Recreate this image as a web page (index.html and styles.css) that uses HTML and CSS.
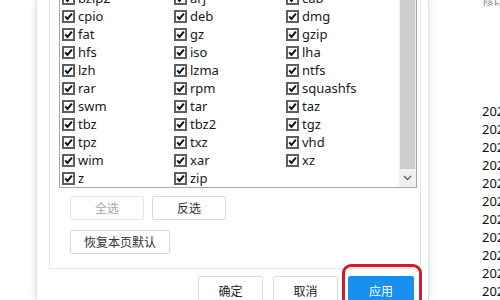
FILE: index.html
```html
<!DOCTYPE html>
<html lang="zh">
<head>
<meta charset="utf-8">
<link rel="stylesheet" href="styles.css">
</head>
<body>
<svg width="0" height="0" class="defs">
  <symbol id="cb" viewBox="0 0 13 13">
    <rect x="1" y="1" width="11" height="11" fill="#fff" stroke="#5f5f5f" stroke-width="2"/>
    <path d="M3.2 6.4 L5.5 8.9 L9.9 3.6" fill="none" stroke="#111" stroke-width="2"/>
  </symbol>
</svg>
<div class="screen">
  <div class="bg-left"></div>
  <div class="dialog">
    <div class="panel">
      <div class="listbox">
        <div class="grid">
          <label class="item"><svg class="cb"><use href="#cb"/></svg>bzip2</label>
          <label class="item"><svg class="cb"><use href="#cb"/></svg>arj</label>
          <label class="item"><svg class="cb"><use href="#cb"/></svg>cab</label>
          <label class="item"><svg class="cb"><use href="#cb"/></svg>cpio</label>
          <label class="item"><svg class="cb"><use href="#cb"/></svg>deb</label>
          <label class="item"><svg class="cb"><use href="#cb"/></svg>dmg</label>
          <label class="item"><svg class="cb"><use href="#cb"/></svg>fat</label>
          <label class="item"><svg class="cb"><use href="#cb"/></svg>gz</label>
          <label class="item"><svg class="cb"><use href="#cb"/></svg>gzip</label>
          <label class="item"><svg class="cb"><use href="#cb"/></svg>hfs</label>
          <label class="item"><svg class="cb"><use href="#cb"/></svg>iso</label>
          <label class="item"><svg class="cb"><use href="#cb"/></svg>lha</label>
          <label class="item"><svg class="cb"><use href="#cb"/></svg>lzh</label>
          <label class="item"><svg class="cb"><use href="#cb"/></svg>lzma</label>
          <label class="item"><svg class="cb"><use href="#cb"/></svg>ntfs</label>
          <label class="item"><svg class="cb"><use href="#cb"/></svg>rar</label>
          <label class="item"><svg class="cb"><use href="#cb"/></svg>rpm</label>
          <label class="item"><svg class="cb"><use href="#cb"/></svg>squashfs</label>
          <label class="item"><svg class="cb"><use href="#cb"/></svg>swm</label>
          <label class="item"><svg class="cb"><use href="#cb"/></svg>tar</label>
          <label class="item"><svg class="cb"><use href="#cb"/></svg>taz</label>
          <label class="item"><svg class="cb"><use href="#cb"/></svg>tbz</label>
          <label class="item"><svg class="cb"><use href="#cb"/></svg>tbz2</label>
          <label class="item"><svg class="cb"><use href="#cb"/></svg>tgz</label>
          <label class="item"><svg class="cb"><use href="#cb"/></svg>tpz</label>
          <label class="item"><svg class="cb"><use href="#cb"/></svg>txz</label>
          <label class="item"><svg class="cb"><use href="#cb"/></svg>vhd</label>
          <label class="item"><svg class="cb"><use href="#cb"/></svg>wim</label>
          <label class="item"><svg class="cb"><use href="#cb"/></svg>xar</label>
          <label class="item"><svg class="cb"><use href="#cb"/></svg>xz</label>
          <label class="item"><svg class="cb"><use href="#cb"/></svg>z</label>
          <label class="item"><svg class="cb"><use href="#cb"/></svg>zip</label>
        </div>
        <div class="scrollbar">
          <div class="thumb"></div>
          <div class="arrow"><svg width="9" height="6" viewBox="0 0 9 6"><path d="M1 1 L4.5 4.5 L8 1" fill="none" stroke="#606060" stroke-width="1.3"/></svg></div>
        </div>
      </div>
      <div class="btn-row first">
        <button class="btn sel disabled">全选</button>
        <button class="btn sel">反选</button>
      </div>
      <div class="btn-row second">
        <button class="btn restore">恢复本页默认</button>
      </div>
    </div>
    <div class="footer">
      <button class="btn foot">确定</button>
      <button class="btn foot">取消</button>
      <div class="apply-wrap">
        <button class="btn foot primary">应用</button>
        <div class="highlight"></div>
      </div>
    </div>
  </div>
  <div class="bg-right">
    <div class="hdr">修改日期</div>
    <div class="dates">
      <div>2024/03/15 10:21</div>
      <div>2024/03/15 10:21</div>
      <div>2024/03/15 10:21</div>
      <div>2024/03/15 10:21</div>
      <div>2024/03/15 10:21</div>
      <div>2024/03/15 10:21</div>
      <div>2024/03/15 10:21</div>
      <div>2024/03/15 10:21</div>
      <div>2024/03/15 10:21</div>
      <div>2024/03/15 10:21</div>
      <div>2024/03/15 10:21</div>
    </div>
  </div>
</div>
</body>
</html>
```

FILE: styles.css
```css
html, body {
  margin: 0;
  padding: 0;
  background: #fff;
}
.defs {
  position: absolute;
  width: 0;
  height: 0;
}
.screen {
  display: flex;
  width: 500px;
  height: 300px;
  overflow: hidden;
  font-family: "Noto Sans", "Noto Sans CJK SC", sans-serif;
  color: #1a1a1a;
}
.bg-left {
  width: 36px;
  flex: none;
  background: #fff;
}
.dialog {
  width: 391px;
  flex: none;
  background: #fff;
  border-left: 1px solid #e2e6eb;
  border-right: 1px solid #dfe3e8;
  box-shadow: 0 0 6px rgba(70, 90, 120, 0.22);
  display: flex;
  flex-direction: column;
  position: relative;
  z-index: 1;
}
.panel {
  margin-left: 12px;
  width: 370px;
  border: 1px solid #e3e6ea;
  border-top: none;
  padding-bottom: 14px;
}
.listbox {
  margin-top: -12px;
  margin-left: 9px;
  width: 356px;
  height: 198px;
  border: 1px solid #a9a9a9;
  display: flex;
  overflow: hidden;
}
.grid {
  width: 337px;
  padding-left: 2px;
  display: grid;
  grid-template-columns: 112px 112px 112px;
  grid-auto-rows: 18px;
  align-content: start;
}
.item {
  display: flex;
  align-items: center;
  gap: 3px;
  font-size: 13px;
  line-height: 18px;
  color: #1a1a1a;
  white-space: nowrap;
}
.cb {
  width: 13px;
  height: 13px;
  flex: none;
}
.scrollbar {
  width: 17px;
  flex: none;
  background: #f0f0f0;
  display: flex;
  flex-direction: column;
}
.thumb {
  height: 180px;
  margin: 0 1px;
  background: #cdcdcd;
}
.arrow {
  flex: 1;
  display: flex;
  align-items: center;
  justify-content: center;
}
.btn-row {
  display: flex;
  gap: 8px;
  margin-left: 20px;
}
.btn-row.first {
  margin-top: 8px;
}
.btn-row.second {
  margin-top: 10px;
}
.btn {
  font-family: "Noto Sans CJK SC", sans-serif;
  font-size: 12px;
  color: #333;
  background: #fff;
  border: 1px solid #d5dae0;
  border-radius: 2px;
  padding: 0;
  height: 24px;
  line-height: 22px;
}
.btn.sel {
  width: 74px;
}
.btn.sel.disabled {
  color: #a8a8a8;
  border-color: #e2e5e9;
}
.btn.restore {
  width: 100px;
}
.footer {
  display: flex;
  justify-content: flex-end;
  gap: 10px;
  margin-top: 7px;
  padding-right: 14px;
}
.btn.foot {
  width: 65px;
  height: 29px;
  line-height: 27px;
  color: #222;
}
.apply-wrap {
  position: relative;
}
.btn.primary {
  width: 66px;
  background: #1890f0;
  border-color: #1890f0;
  color: #fff;
}
.highlight {
  position: absolute;
  top: -12px;
  left: -6px;
  right: -8px;
  bottom: -12px;
  border: 3px solid #cc1f27;
  border-radius: 9px;
}
.bg-right {
  flex: 1;
  background: #fff;
  padding-left: 53px;
  overflow: hidden;
  font-size: 13px;
  white-space: nowrap;
}
.hdr {
  margin-top: -6px;
  height: 12px;
  line-height: 12px;
  font-family: "Noto Sans CJK SC", sans-serif;
  font-size: 12px;
  color: #8a8a8a;
}
.dates {
  margin-top: 96px;
  line-height: 18px;
  color: #111;
}
```
